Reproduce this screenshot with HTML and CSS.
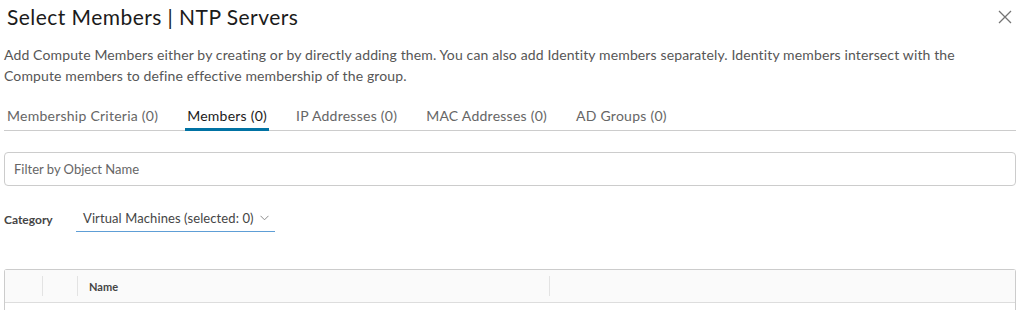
FILE: index.html
```html
<!DOCTYPE html>
<html lang="en">
<head>
    <meta charset="UTF-8">
    <title>Select Members | NTP Servers</title>
    <link rel="stylesheet" href="styles.css">
</head>
<body>
    <div class="modal">
        <div class="modal-header">
            <h2 class="modal-title">Select Members | NTP Servers</h2>
            <button class="close-btn" aria-label="Close">
                <svg width="14" height="14" viewBox="0 0 14 14">
                    <path d="M1 1 L13 13 M13 1 L1 13" stroke="#747474" stroke-width="1.3" fill="none"/>
                </svg>
            </button>
        </div>

        <p class="intro">Add Compute Members either by creating or by directly adding them. You can also add Identity members separately. Identity members intersect with the Compute members to define effective membership of the group.</p>

        <ul class="tabs">
            <li class="tab">Membership Criteria (0)</li>
            <li class="tab active">Members (0)</li>
            <li class="tab">IP Addresses (0)</li>
            <li class="tab">MAC Addresses (0)</li>
            <li class="tab">AD Groups (0)</li>
        </ul>

        <input class="filter" type="text" placeholder="Filter by Object Name">

        <div class="category-row">
            <span class="category-label">Category</span>
            <div class="select">
                <span>Virtual Machines (selected: 0)</span>
                <svg width="9" height="6" viewBox="0 0 9 6">
                    <path d="M0.5 0.8 L4.5 4.8 L8.5 0.8" stroke="#8c8c8c" stroke-width="1" fill="none"/>
                </svg>
            </div>
        </div>

        <div class="grid">
            <div class="grid-head">
                <div class="cell cell-check"></div>
                <div class="cell cell-expand"></div>
                <div class="cell cell-name">Name</div>
                <div class="cell cell-rest"></div>
            </div>
        </div>
    </div>
</body>
</html>
```

FILE: styles.css
```css
body {
    margin: 0;
    font-family: Lato, "Open Sans", sans-serif;
    color: #565656;
    background: #fff;
    overflow: hidden;
}

.modal {
    padding: 0 8px 0 4px;
}

.modal-header {
    display: flex;
    align-items: center;
    justify-content: space-between;
    height: 33px;
}

.modal-title {
    margin: 0 0 0 3px;
    font-size: 21px;
    font-weight: 400;
    letter-spacing: 0.45px;
    color: #1b1b1b;
}

.close-btn {
    border: none;
    background: none;
    padding: 0;
    margin-right: 4px;
    display: flex;
}

.intro {
    margin: 11px 0 0 0;
    font-size: 14px;
    line-height: 21px;
    letter-spacing: 0.13px;
    color: #565656;
}

.tabs {
    list-style: none;
    display: flex;
    gap: 29px;
    margin: 14px 0 0 0;
    padding: 0 0 0 3px;
    border-bottom: 1px solid #cccccc;
}

.tab {
    font-size: 14px;
    letter-spacing: 0.25px;
    color: #666666;
    padding: 7px 0 4px 0;
    border-bottom: 3px solid transparent;
    margin-bottom: -1px;
}

.tab.active {
    color: #1b1b1b;
    border-bottom-color: #0072a3;
    padding: 7px 2px 4px;
    margin-left: -2px;
    margin-right: -2px;
}

.filter {
    display: block;
    box-sizing: border-box;
    width: 100%;
    height: 34px;
    margin-top: 21px;
    padding: 0 9px;
    border: 1px solid #cccccc;
    border-radius: 4px;
    font-family: inherit;
    font-size: 13px;
    color: #565656;
}

.filter::placeholder {
    color: #666666;
}

.category-row {
    display: flex;
    align-items: center;
    margin-top: 20px;
}

.category-label {
    width: 72px;
    font-size: 12px;
    font-weight: 700;
    color: #454545;
}

.select {
    display: flex;
    align-items: center;
    gap: 6px;
    padding: 4px 6px 5px 7px;
    border-bottom: 1px solid #5e9ed6;
    font-size: 13px;
    letter-spacing: 0.1px;
    color: #454545;
}

.grid {
    margin-top: 37px;
    border: 1px solid #cccccc;
    border-bottom: none;
    border-radius: 3px 3px 0 0;
    height: 40px;
}

.grid-head {
    display: flex;
    height: 32px;
    align-items: center;
    background: #fafafa;
    border-bottom: 1px solid #dddddd;
}

.cell {
    height: 20px;
    display: flex;
    align-items: center;
    border-right: 1px solid #e3e3e3;
}

.cell-check {
    width: 37px;
}

.cell-expand {
    width: 34px;
}

.cell-name {
    width: 460px;
    padding-left: 11px;
    font-size: 11px;
    font-weight: 700;
    color: #454545;
}

.cell-rest {
    flex: 1;
    border-right: none;
}
```
